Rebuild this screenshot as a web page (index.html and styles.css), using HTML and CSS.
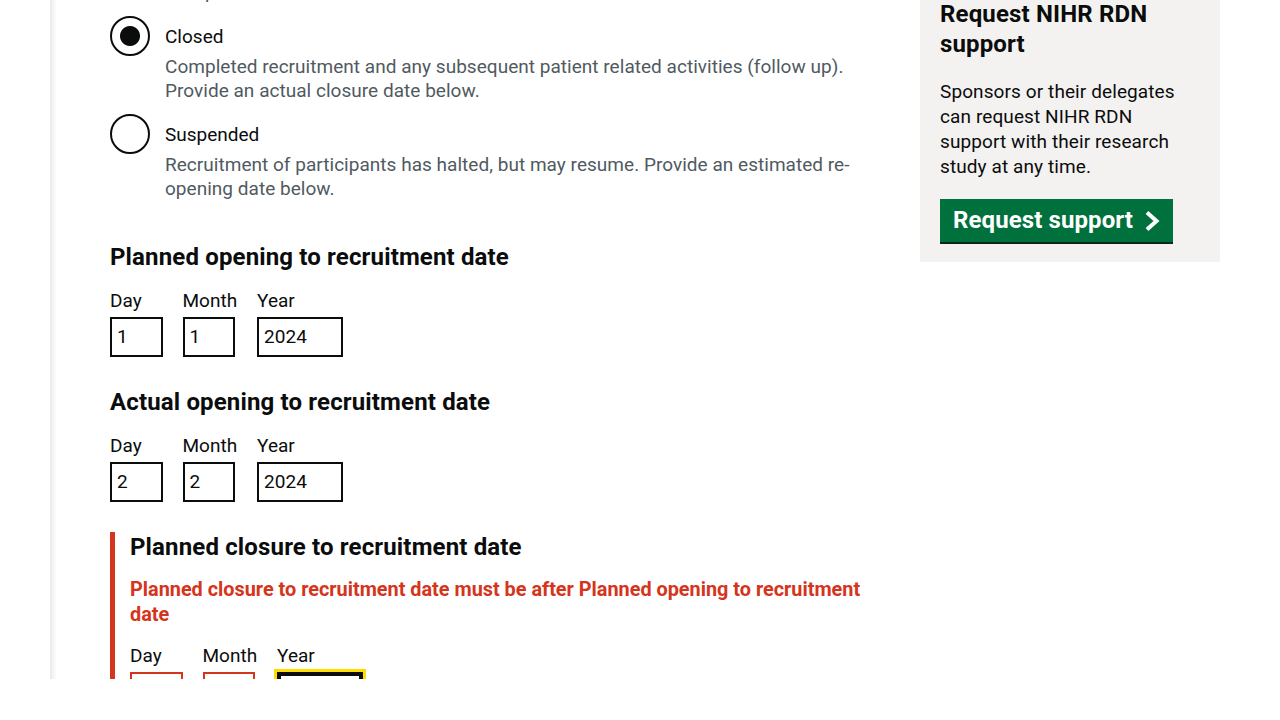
FILE: index.html
```html
<!DOCTYPE html>
<html lang="en">
<head>
<meta charset="utf-8">
<title>Update study status</title>
<link rel="stylesheet" href="styles.css">
</head>
<body>
<div class="viewport">
  <div class="page">
    <main class="main">
      <p class="hint hint-prev">Complete</p>

      <div class="radios">
        <div class="radio-item">
          <input class="radio-input" type="radio" name="status" id="closed" checked>
          <div class="radio-text">
            <label class="radio-label" for="closed">Closed</label>
            <div class="hint">Completed recruitment and any subsequent patient related activities (follow up). Provide an actual closure date below.</div>
          </div>
        </div>
        <div class="radio-item">
          <input class="radio-input" type="radio" name="status" id="suspended">
          <div class="radio-text">
            <label class="radio-label" for="suspended">Suspended</label>
            <div class="hint">Recruitment of participants has halted, but may resume. Provide an estimated re-opening date below.</div>
          </div>
        </div>
      </div>

      <div class="form-group">
        <h2 class="date-heading">Planned opening to recruitment date</h2>
        <div class="date-input">
          <div class="date-item"><label class="date-label">Day</label><input class="input w-2" value="1"></div>
          <div class="date-item"><label class="date-label">Month</label><input class="input w-2" value="1"></div>
          <div class="date-item"><label class="date-label">Year</label><input class="input w-4" value="2024"></div>
        </div>
      </div>

      <div class="form-group">
        <h2 class="date-heading">Actual opening to recruitment date</h2>
        <div class="date-input">
          <div class="date-item"><label class="date-label">Day</label><input class="input w-2" value="2"></div>
          <div class="date-item"><label class="date-label">Month</label><input class="input w-2" value="2"></div>
          <div class="date-item"><label class="date-label">Year</label><input class="input w-4" value="2024"></div>
        </div>
      </div>

      <div class="form-group form-group-error">
        <h2 class="date-heading">Planned closure to recruitment date</h2>
        <p class="error-message">Planned closure to recruitment date must be after Planned opening to recruitment date</p>
        <div class="date-input">
          <div class="date-item"><label class="date-label">Day</label><input class="input w-2 input-error" value=""></div>
          <div class="date-item"><label class="date-label">Month</label><input class="input w-2 input-error" value=""></div>
          <div class="date-item"><label class="date-label">Year</label><input class="input w-4 input-focus" value=""></div>
        </div>
      </div>
    </main>

    <aside class="sidebar">
      <h2 class="sidebar-heading">Request NIHR RDN support</h2>
      <p class="sidebar-text">Sponsors or their delegates can request NIHR RDN support with their research study at any time.</p>
      <a class="button" href="#">Request support
        <svg class="chevron" width="16" height="22" viewBox="0 0 16 22" aria-hidden="true"><polyline points="3,2.5 12.5,11 3,19.5" fill="none" stroke="#fff" stroke-width="4"/></svg>
      </a>
    </aside>
  </div>
</div>
</body>
</html>
```

FILE: styles.css
```css
* { box-sizing: border-box; }

html, body {
  margin: 0;
  padding: 0;
  background: #fff;
}

body {
  font-family: Roboto, "Liberation Sans", Arial, sans-serif;
  color: #0b0c0c;
  font-size: 19px;
  line-height: 25px;
}

.viewport {
  height: 679px;
  overflow: hidden;
}

.page {
  display: flex;
  align-items: flex-start;
  gap: 40px;
  margin-top: -21px;
}

.main {
  margin-left: 50px;
  width: 830px;
  padding-left: 60px;
  min-height: 760px;
  background: linear-gradient(to right, #e9e9e9 0, #f4f4f4 3px, #fff 7px);
}

.hint {
  color: #505a5f;
  font-size: 19px;
  line-height: 24.5px;
  margin: 0;
  letter-spacing: 0.03px;
}

.hint-prev {
  margin-top: 1px;
  padding-left: 55px;
}

.radios {
  margin-top: 11px;
}

.radio-item {
  display: flex;
  margin-bottom: 10px;
}

.radio-input {
  appearance: none;
  -webkit-appearance: none;
  flex: none;
  width: 40px;
  height: 40px;
  margin: 0;
  border: 2px solid #0b0c0c;
  border-radius: 50%;
  background: #fff;
}

.radio-input:checked {
  background: radial-gradient(circle, #0b0c0c 0, #0b0c0c 9.5px, #fff 10.5px);
}

.radio-text {
  padding: 0 15px;
}

.radio-label {
  display: block;
  padding: 8px 0 6px;
}

.form-group {
  margin-top: 40px;
}

.form-group + .form-group {
  margin-top: 30px;
}

.date-heading {
  font-size: 24px;
  line-height: 30px;
  font-weight: 700;
  letter-spacing: 0.15px;
  margin: 0 0 15px;
}

.date-input {
  display: flex;
}

.date-item {
  display: flex;
  flex-direction: column;
  align-items: flex-start;
  margin-right: 20px;
}

.date-label {
  display: block;
  padding-top: 1px;
  margin-bottom: 4px;
}

.input {
  height: 40px;
  margin: 0;
  padding: 5px;
  border: 2px solid #0b0c0c;
  border-radius: 0;
  font-family: inherit;
  font-size: 19px;
  color: #0b0c0c;
  background: #fff;
}

.w-2 { width: 52.5px; }
.w-4 { width: 86px; }

.form-group-error {
  border-left: 5px solid #d4351c;
  padding-left: 15px;
}

.error-message {
  color: #d4351c;
  font-size: 19.85px;
  font-weight: 700;
  margin: 0 0 15px;
  padding-right: 10px;
}

.input-error {
  border-color: #d4351c;
}

.input-focus {
  outline: 3px solid #ffdd00;
  outline-offset: 0;
  box-shadow: inset 0 0 0 2px #0b0c0c;
}

.sidebar {
  width: 300px;
  flex: none;
  background: #f3f2f1;
  padding: 20px;
}

.sidebar-heading {
  font-size: 24px;
  line-height: 30px;
  font-weight: 700;
  letter-spacing: 0.15px;
  margin: 0 0 20px;
}

.sidebar-text {
  margin: 0 0 20px;
  letter-spacing: 0.1px;
}

.button {
  display: inline-flex;
  align-items: center;
  gap: 11px;
  height: 43px;
  padding: 0 13px 0 13px;
  background: #00703c;
  color: #fff;
  font-size: 24px;
  font-weight: 700;
  letter-spacing: 0.1px;
  text-decoration: none;
  box-shadow: 0 2px 0 #002d18;
}

.chevron {
  display: block;
}
```
